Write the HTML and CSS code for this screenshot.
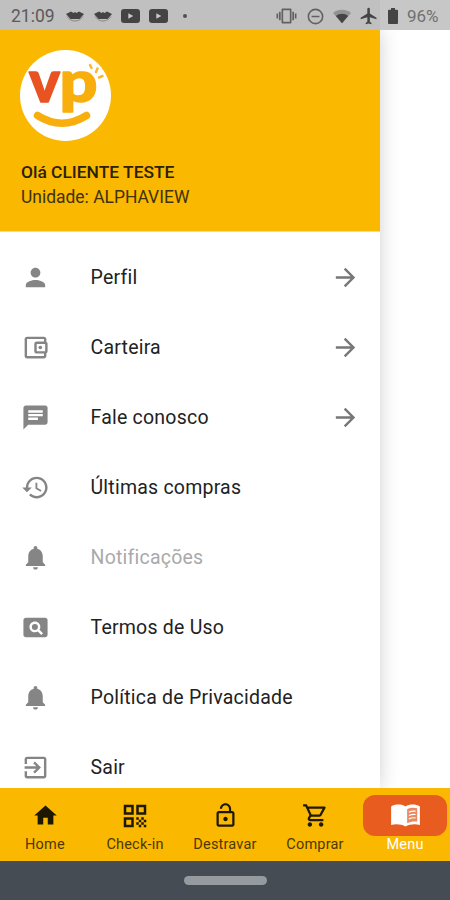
FILE: index.html
```html
<!DOCTYPE html>
<html lang="pt-BR">
<head>
<meta charset="utf-8">
<title>Menu</title>
<link rel="stylesheet" href="styles.css">
</head>
<body>
<div class="app">
  <header class="status">
    <span class="clock">21:09</span>
    <svg class="st-eye" viewBox="0 0 18 12"><path class="eye-line" d="M1 6.500C5 12.500 13 12.500 17 6.500"/><path d="M0 4l5-2.500 2.500 1.500L9 2l1.500 1L13 1.500l5 2.500-4.500 5h-9z"/></svg>
    <svg class="st-eye second" viewBox="0 0 18 12"><path class="eye-line" d="M1 6.500C5 12.500 13 12.500 17 6.500"/><path d="M0 4l5-2.500 2.500 1.500L9 2l1.500 1L13 1.500l5 2.500-4.500 5h-9z"/></svg>
    <svg class="st-video" viewBox="0 0 19 14"><rect width="19" height="14" rx="3"/><path class="play" d="M7.300 4.200v5.600L12.300 7z"/></svg>
    <svg class="st-video" viewBox="0 0 19 14"><rect width="19" height="14" rx="3"/><path class="play" d="M7.300 4.200v5.600L12.300 7z"/></svg>
    <span class="dot"></span>
    <div class="status-right">
      <svg class="st-vib" viewBox="0 0 24 24"><path d="M0 15h2V9H0v6zm3 2h2V7H3v10zm19-8v6h2V9h-2zm-3 8h2V7h-2v10zM16.500 3h-9C6.670 3 6 3.670 6 4.500v15c0 .83.67 1.500 1.500 1.500h9c.83 0 1.500-.67 1.500-1.500v-15c0-.83-.67-1.500-1.500-1.500zM16 19H8V5h8v14z"/></svg>
      <svg class="st-dnd" viewBox="0 0 24 24"><path d="M7 11v2h10v-2H7zm5-9a10 10 0 100 20 10 10 0 000-20zm0 18a8 8 0 110-16 8 8 0 010 16z"/></svg>
      <svg class="st-wifi" viewBox="0 0 20 16"><path class="wifi-soft" d="M10 15.500L0 4C5.500-.8 14.500-.8 20 4z"/><path d="M10 15.500L3.200 7.500C7 4.200 13 4.200 16.800 7.500z"/></svg>
      <svg class="st-plane" viewBox="0 0 24 24"><path d="M21 16v-2l-8-5V3.500a1.500 1.500 0 00-3 0V9l-8 5v2l8-2.500V19l-2 1.500V22l3.500-1 3.500 1v-1.500L13 19v-5.500z"/></svg>
      <svg class="st-bat" viewBox="0 0 10 16"><path d="M3 0h4v1.800h2q1 0 1 1V15q0 1-1 1H1q-1 0-1-1V2.800q0-1 1-1h2z"/></svg>
      <span class="percent">96%</span>
    </div>
  </header>

  <main class="stage">
    <aside class="drawer">
      <div class="profile">
        <svg class="logo" viewBox="0 0 91 91">
          <circle cx="45.500" cy="45.500" r="45.500" fill="#fff"/>
          <text class="logo-v" x="9" y="52" textLength="31" lengthAdjust="spacingAndGlyphs">v</text>
          <text class="logo-p" x="39.500" y="52" textLength="38" lengthAdjust="spacingAndGlyphs">p</text>
          <path class="smile" d="M17.500 65.500Q42 81 66.500 65.500"/>
          <path class="spark" d="M70 15l1.500 3M77.500 18.500l-1.500 3.500M82.500 26l-3.500 1.500"/>
        </svg>
        <div class="hello">Olá CLIENTE TESTE</div>
        <div class="unit">Unidade: ALPHAVIEW</div>
      </div>
      <ul class="menu">
        <li class="row"><svg class="icon" viewBox="0 0 24 24"><path d="M12 12c2.210 0 4-1.790 4-4s-1.790-4-4-4-4 1.790-4 4 1.790 4 4 4zm0 2c-2.670 0-8 1.340-8 4v2h16v-2c0-2.660-5.330-4-8-4z"/></svg><span class="label">Perfil</span><svg class="arrow" viewBox="0 0 24 24"><path d="M12 4l-1.410 1.410L16.170 11H4v2h12.170l-5.580 5.590L12 20l8-8z"/></svg></li>
        <li class="row"><svg class="icon" viewBox="0 0 24 24"><path d="M21 7.280V5c0-1.100-.9-2-2-2H5c-1.110 0-2 .9-2 2v14c0 1.100.89 2 2 2h14c1.100 0 2-.9 2-2v-2.280c.59-.35 1-.98 1-1.720V9c0-.74-.41-1.370-1-1.720zM20 9v6h-7V9h7zM5 19V5h14v2h-6c-1.100 0-2 .9-2 2v6c0 1.100.9 2 2 2h6v2H5z"/><circle cx="16" cy="12" r="1.500"/></svg><span class="label">Carteira</span><svg class="arrow" viewBox="0 0 24 24"><path d="M12 4l-1.410 1.410L16.170 11H4v2h12.170l-5.580 5.590L12 20l8-8z"/></svg></li>
        <li class="row"><svg class="icon" viewBox="0 0 24 24"><path d="M20 2H4c-1.100 0-1.990.9-1.990 2L2 22l4-4h14c1.100 0 2-.9 2-2V4c0-1.100-.9-2-2-2zM6 9h12v2H6V9zm8 5H6v-2h8v2zm4-6H6V6h12v2z"/></svg><span class="label">Fale conosco</span><svg class="arrow" viewBox="0 0 24 24"><path d="M12 4l-1.410 1.410L16.170 11H4v2h12.170l-5.580 5.590L12 20l8-8z"/></svg></li>
        <li class="row"><svg class="icon" viewBox="0 0 24 24"><path d="M13 3c-4.970 0-9 4.030-9 9H1l3.890 3.890.07.14L9 12H6c0-3.870 3.130-7 7-7s7 3.130 7 7-3.130 7-7 7c-1.930 0-3.680-.79-4.940-2.060l-1.420 1.420C8.270 19.990 10.510 21 13 21c4.970 0 9-4.030 9-9s-4.030-9-9-9zm-1 5v5l4.280 2.540.72-1.210-3.500-2.080V8H12z"/></svg><span class="label">Últimas compras</span></li>
        <li class="row muted"><svg class="icon" viewBox="0 0 24 24"><path d="M12 22c1.100 0 2-.9 2-2h-4c0 1.100.89 2 2 2zm6-6v-5c0-3.070-1.640-5.640-4.500-6.320V4c0-.83-.67-1.500-1.500-1.500s-1.500.67-1.500 1.500v.68C7.630 5.360 6 7.920 6 11v5l-2 2v1h16v-1l-2-2z"/></svg><span class="label">Notificações</span></li>
        <li class="row"><svg class="icon" viewBox="0 0 24 24"><path d="M11.500 9a2.500 2.500 0 100 5 2.500 2.500 0 000-5zM20 4H4c-1.100 0-2 .9-2 2v12c0 1.100.9 2 2 2h16c1.100 0 2-.9 2-2V6c0-1.100-.9-2-2-2zm-3.210 14.210l-2.910-2.910c-.69.44-1.510.7-2.390.7C9.010 16 7 13.990 7 11.500S9.010 7 11.500 7 16 9.010 16 11.500c0 .88-.26 1.690-.7 2.390l2.910 2.900-1.420 1.420z"/></svg><span class="label">Termos de Uso</span></li>
        <li class="row"><svg class="icon" viewBox="0 0 24 24"><path d="M12 22c1.100 0 2-.9 2-2h-4c0 1.100.89 2 2 2zm6-6v-5c0-3.070-1.640-5.640-4.500-6.320V4c0-.83-.67-1.500-1.500-1.500s-1.500.67-1.500 1.500v.68C7.630 5.360 6 7.920 6 11v5l-2 2v1h16v-1l-2-2z"/></svg><span class="label">Política de Privacidade</span></li>
        <li class="row"><svg class="icon" viewBox="0 0 24 24"><path d="M10.090 15.590L11.500 17l5-5-5-5-1.410 1.410L12.670 11H3v2h9.670l-2.580 2.590zM19 3H5c-1.110 0-2 .9-2 2v4h2V5h14v14H5v-4H3v4c0 1.100.89 2 2 2h14c1.100 0 2-.9 2-2V5c0-1.100-.9-2-2-2z"/></svg><span class="label">Sair</span></li>
      </ul>
    </aside>
  </main>

  <nav class="tabs">
    <div class="tab"><span class="pill"><svg viewBox="0 0 24 24"><path d="M10 20v-6h4v6h5v-8h3L12 3 2 12h3v8z"/></svg></span><span class="tab-label">Home</span></div>
    <div class="tab"><span class="pill"><svg class="qr" viewBox="0 0 24 24"><path d="M3 11h8V3H3v8zm2-6h4v4H5V5zM3 21h8v-8H3v8zm2-6h4v4H5v-4zM13 3v8h8V3h-8zm6 6h-4V5h4v4zM19 19h2v2h-2zM13 13h2v2h-2zM15 15h2v2h-2zM13 17h2v2h-2zM15 19h2v2h-2zM17 17h2v2h-2zM17 13h2v2h-2zM19 15h2v2h-2z"/></svg></span><span class="tab-label">Check-in</span></div>
    <div class="tab"><span class="pill"><svg viewBox="0 0 24 24"><path d="M12 17c1.100 0 2-.9 2-2s-.9-2-2-2-2 .9-2 2 .9 2 2 2zm6-9h-1V6c0-2.760-2.240-5-5-5S7 3.240 7 6h1.900c0-1.710 1.390-3.100 3.100-3.100s3.100 1.390 3.100 3.100v2H6c-1.100 0-2 .9-2 2v10c0 1.100.9 2 2 2h12c1.100 0 2-.9 2-2V10c0-1.100-.9-2-2-2zm0 12H6V10h12v10z"/></svg></span><span class="tab-label">Destravar</span></div>
    <div class="tab"><span class="pill"><svg viewBox="0 0 24 24"><path d="M15.550 13c.75 0 1.410-.41 1.750-1.030l3.580-6.490A.996.996 0 0020.010 4H5.210l-.94-2H1v2h2l3.600 7.590-1.350 2.440C4.520 15.370 5.480 17 7 17h12v-2H7l1.100-2h7.450zM6.160 6h12.150l-2.760 5H8.530L6.160 6zM7 18c-1.100 0-1.990.9-1.990 2S5.900 22 7 22s2-.9 2-2-.9-2-2-2zm10 0c-1.100 0-1.990.9-1.990 2s.89 2 1.990 2 2-.9 2-2-.9-2-2-2z"/></svg></span><span class="tab-label">Comprar</span></div>
    <div class="tab active"><span class="pill"><svg class="book" viewBox="0 0 30 24"><path d="M0 2.500C4 0 11 0 15 2.500C19 0 26 0 30 2.500V22C25.500 20.500 19 21 15 23.500C11 21 4.500 20.500 0 22z"/><path class="page" d="M16.700 5.500C20 3.800 24 3.500 27.200 4.500V18.500C24 18 20 18.500 16.700 20z"/><path class="page-lines" d="M18.500 8.500q3.500-1.500 7-1M18.500 12q3.500-1.500 7-1M18.500 15.500q3.500-1.500 7-1"/></svg></span><span class="tab-label">Menu</span></div>
  </nav>
  <footer class="system"><span class="handle"></span></footer>
</div>
</body>
</html>
```

FILE: styles.css
```css
* { box-sizing: border-box; }
body {
  margin: 0;
  font-family: Roboto, "Liberation Sans", sans-serif;
  background: #fff;
}
svg { display: block; flex: none; }
.app {
  width: 450px;
  height: 900px;
  display: flex;
  flex-direction: column;
  overflow: hidden;
}
.status {
  flex: none;
  height: 30px;
  display: flex;
  align-items: center;
  padding: 2px 9px 0 11px;
  color: #5a5a5a;
  fill: #444;
  background: linear-gradient(90deg, #c0c0c0 380px, #c7c7c7 380px);
}
.clock { width: 55px; font-size: 17.500px; }
.st-eye { width: 18px; height: 12px; }
.second { margin: 0 9px 0 10px; }
.eye-line { fill: none; stroke: #888; stroke-width: 1; }
.st-video { width: 19px; height: 14px; margin-right: 9px; }
.play { fill: #c8c8c8; }
.dot { width: 4px; height: 4px; border-radius: 50%; background: #505050; margin-left: 6px; }
.status-right { margin-left: auto; display: flex; align-items: center; }
.st-vib { width: 21px; height: 20px; margin-right: 9px; fill: #606060; }
.st-dnd { width: 19px; height: 19px; margin-right: 8px; fill: #606060; }
.st-wifi { width: 18px; height: 15px; margin-right: 8px; }
.wifi-soft { fill: #929292; }
.st-plane { width: 20px; height: 20px; margin-right: 9px; }
.st-bat { width: 10px; height: 16px; margin-right: 9px; }
.percent { font-size: 17px; width: 34px; color: #707070; }

.stage { flex: none; height: 758px; overflow: hidden; background: #fff; }
.drawer {
  width: 380px;
  height: 758px;
  background: #fff;
  box-shadow: 0 0 18px rgba(0, 0, 0, .19);
}
.profile {
  height: 202px;
  padding: 20px 20px 0;
  background: #fbb800;
  border-bottom: 1px solid #ffdc7c;
  color: #2b2100;
}
.logo { width: 91px; height: 91px; overflow: visible; }
.logo-v, .logo-p { font-family: Lato, sans-serif; font-weight: 900; font-size: 58px; stroke-width: 1.500; stroke-linejoin: round; }
.logo-v { fill: #e95322; stroke: #e95322; }
.logo-p { fill: #f8ae0c; stroke: #f8ae0c; }
.smile { fill: none; stroke: #f8ae0c; stroke-width: 7.500; stroke-linecap: round; }
.spark { fill: none; stroke: #f8b92c; stroke-width: 2.500; stroke-linecap: round; }
.hello, .unit { line-height: 25px; padding-left: 1px; white-space: nowrap; }
.hello { margin-top: 18px; padding-top: 1px; font-size: 17.400px; font-weight: 500; }
.unit { font-size: 17.450px; color: #40320a; }

.menu { list-style: none; margin: 0; padding: 10px 20px 0 21px; }
.row { height: 70px; display: flex; align-items: center; color: #222; }
.icon { width: 29px; height: 29px; margin-right: 40.500px; fill: #858585; }
.label { flex: 1; font-size: 19.500px; letter-spacing: .22px; }
.muted .label { color: #aaa; }
.arrow { width: 29px; height: 29px; fill: #777; }

.tabs { flex: none; height: 73px; display: flex; background: #fbb800; }
.tab {
  width: 90px;
  padding-top: 7px;
  display: flex;
  flex-direction: column;
  align-items: center;
  color: #4c3900;
  fill: #1f1800;
}
.pill { width: 84px; height: 41px; display: flex; align-items: center; justify-content: center; border-radius: 12px; }
.pill svg { width: 27px; height: 27px; }
.pill .qr { width: 30px; height: 30px; }
.tab-label { font-size: 14.500px; line-height: 17px; letter-spacing: .2px; }
.active { color: #fff; fill: #fff; }
.active .pill { background: #e85c20; }
.pill .book { width: 29px; height: 23px; }
.page { fill: #e98a62; }
.page-lines { fill: none; stroke: #fff; stroke-width: 1.200; }

.system { flex: 1; display: flex; justify-content: center; align-items: center; background: #454c53; }
.handle { width: 83px; height: 9px; border-radius: 5px; background: #959b9f; }
```
